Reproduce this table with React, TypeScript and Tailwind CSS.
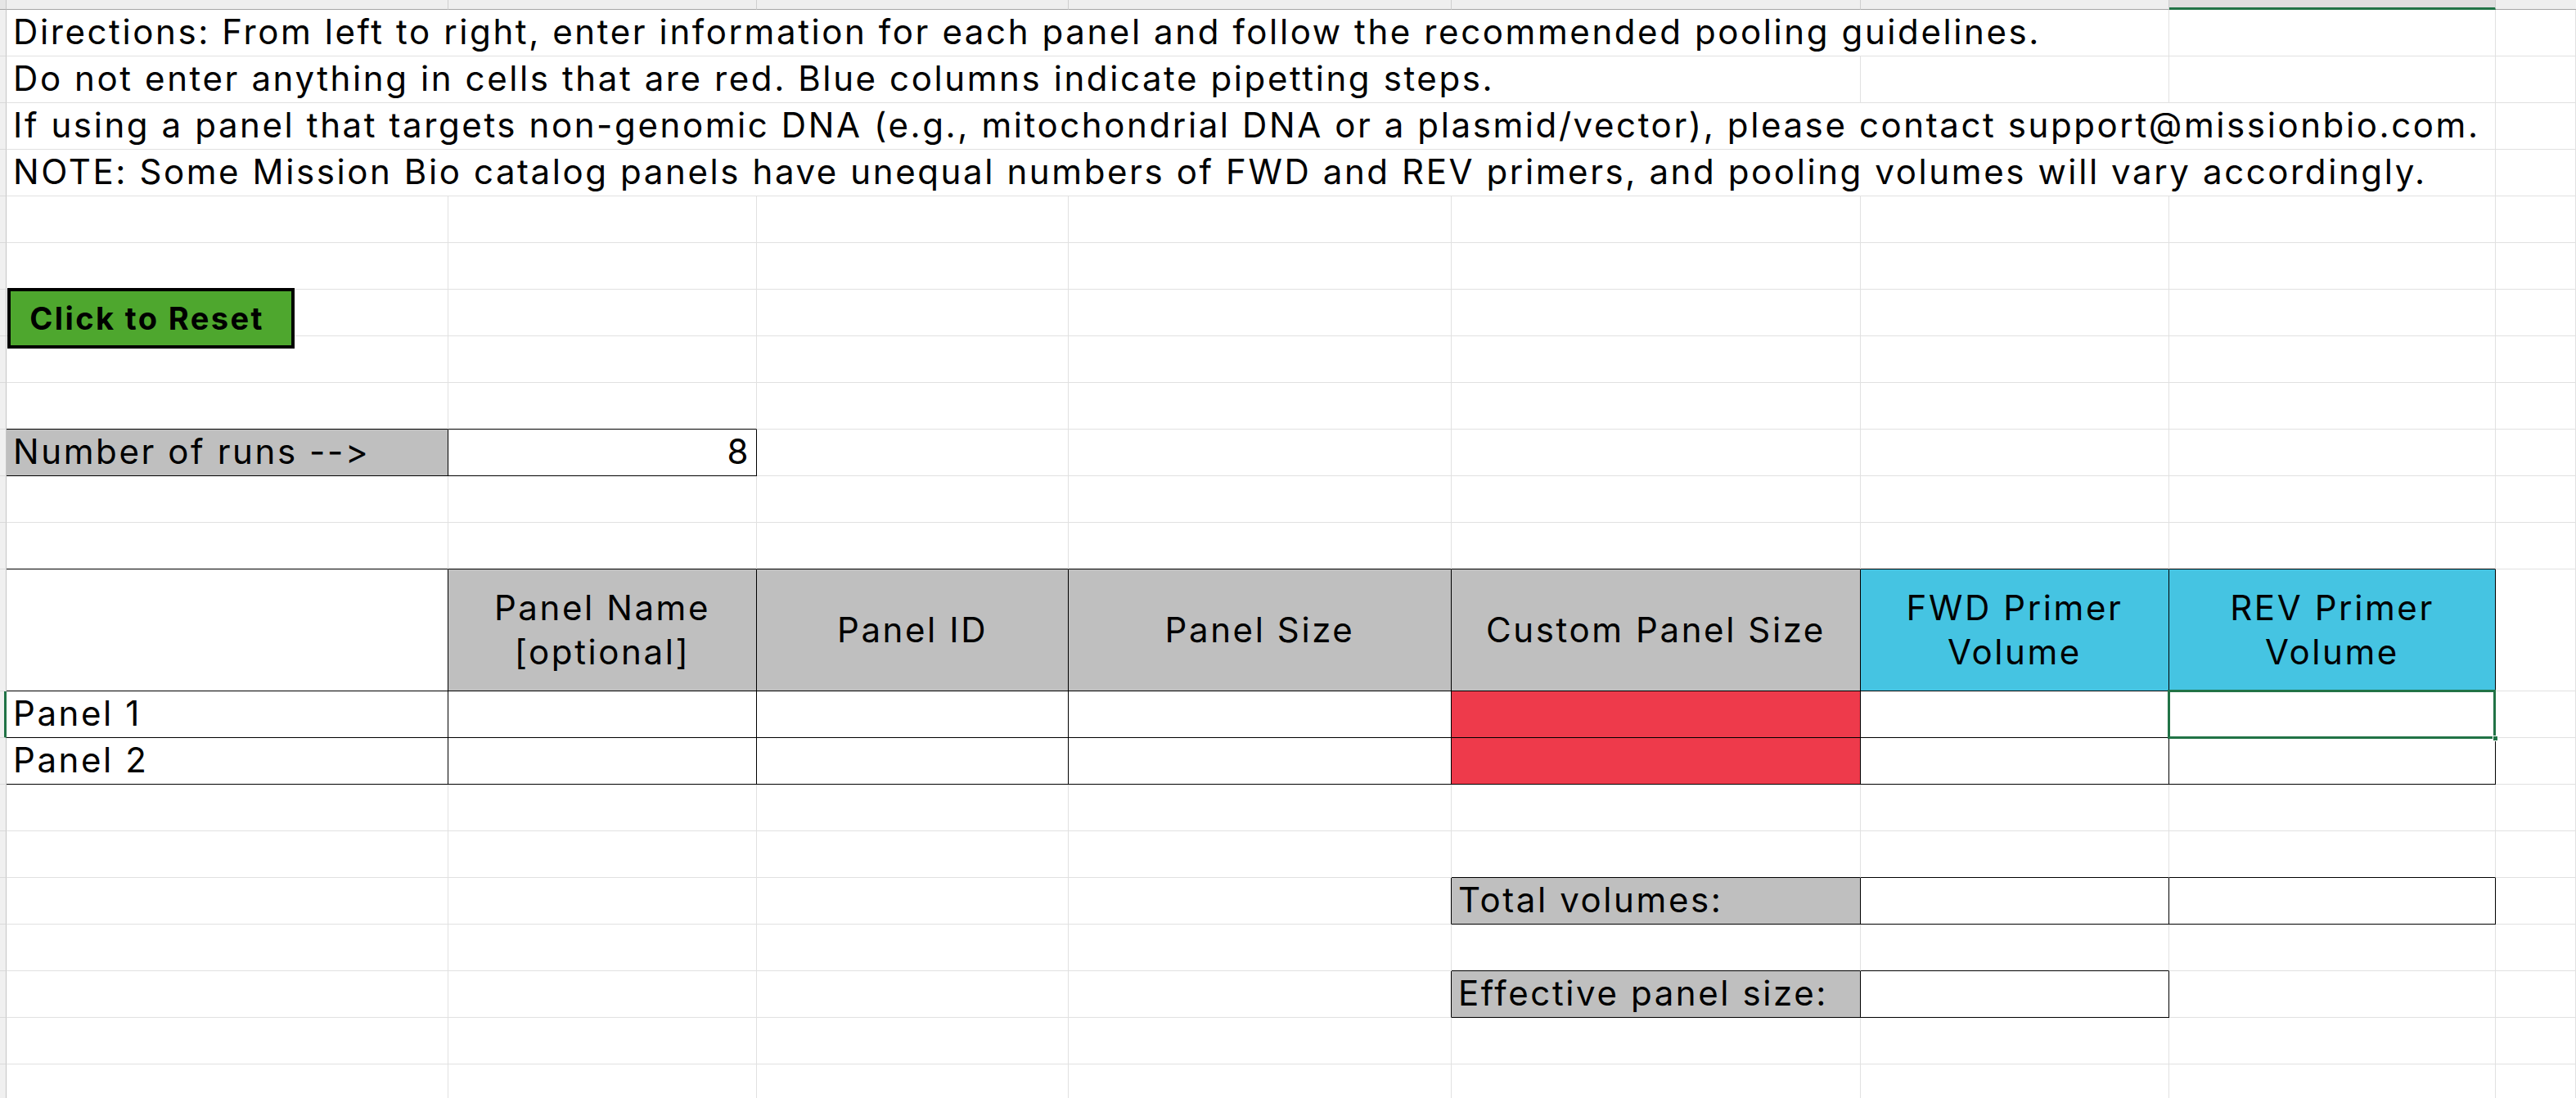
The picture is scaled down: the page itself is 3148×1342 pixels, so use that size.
import React from "react";

type Line = "grid" | "black" | "none";

interface CellSpec {
  span?: number;
  r?: Line;
  b?: Line;
  bg?: string;
  text?: React.ReactNode;
  align?: "left" | "right" | "center";
  selected?: boolean;
}

const GREY = "bg-[#bfbfbf]";
const RED = "bg-[#ee3a4b]";
const CYAN = "bg-[#45c4e2]";

const spanClass: Record<number, string> = {
  1: "",
  5: "col-span-5",
  6: "col-span-6",
  7: "col-span-7",
};

function Cell({ span = 1, r = "grid", b = "grid", bg = "bg-white", text, align = "left", selected }: CellSpec) {
  const rc = r === "black" ? "border-r-black" : r === "none" ? "border-r-transparent" : "border-r-[#e1e1e1]";
  const bc = b === "black" ? "border-b-black" : b === "none" ? "border-b-transparent" : "border-b-[#e1e1e1]";
  const al =
    align === "center"
      ? "items-center justify-center text-center px-2"
      : align === "right"
        ? "items-end justify-end pr-[7px] pb-[8px]"
        : "items-end justify-start pl-[8px] pb-[8px]";

  return (
    <div className={`relative flex border-r border-b ${rc} ${bc} ${bg} ${al} ${spanClass[span]}`}>
      {text !== undefined &&
        (align === "center" ? (
          <span className="leading-[54px]">{text}</span>
        ) : (
          <span className="whitespace-nowrap leading-none">{text}</span>
        ))}
      {selected && (
        <>
          <div className="pointer-events-none absolute -top-[2px] -left-[2px] -right-[1px] -bottom-[2px] z-10 border-[3px] border-[#217346]" />
          <div className="absolute -right-[4px] -bottom-[5px] z-10 h-[7px] w-[7px] border border-white bg-[#217346]" />
        </>
      )}
    </div>
  );
}

const empty = (n: number): CellSpec[] => Array.from({ length: n }, () => ({}));

const rows: CellSpec[][] = [
  [
    {
      span: 6,
      text: "Directions: From left to right, enter information for each panel and follow the recommended pooling guidelines.",
    },
    {},
    {},
  ],
  [{ span: 5, text: "Do not enter anything in cells that are red. Blue columns indicate pipetting steps." }, {}, {}, {}],
  [
    {
      span: 7,
      text: "If using a panel that targets non-genomic DNA (e.g., mitochondrial DNA or a plasmid/vector), please contact support@missionbio.com.",
    },
    {},
  ],
  [
    {
      span: 7,
      text: "NOTE: Some Mission Bio catalog panels have unequal numbers of FWD and REV primers, and pooling volumes will vary accordingly.",
    },
    {},
  ],
  empty(8),
  empty(8),
  empty(8),
  empty(8),
  [{ b: "black" }, { b: "black" }, ...empty(6)],
  [
    { bg: GREY, r: "black", b: "black", text: "Number of runs -->" },
    { r: "black", b: "black", text: "8", align: "right" },
    ...empty(6),
  ],
  empty(8),
  [...Array.from({ length: 7 }, (): CellSpec => ({ b: "black" })), {}],
  [
    { r: "black", b: "black" },
    { bg: GREY, r: "black", b: "black", align: "center", text: <>Panel Name<br />[optional]</> },
    { bg: GREY, r: "black", b: "black", align: "center", text: "Panel ID" },
    { bg: GREY, r: "black", b: "black", align: "center", text: "Panel Size" },
    { bg: GREY, r: "black", b: "black", align: "center", text: "Custom Panel Size" },
    { bg: CYAN, r: "black", b: "black", align: "center", text: <>FWD Primer<br />Volume</> },
    { bg: CYAN, r: "black", b: "black", align: "center", text: <>REV Primer<br />Volume</> },
    {},
  ],
  [
    { r: "black", b: "black", text: "Panel 1" },
    { r: "black", b: "black" },
    { r: "black", b: "black" },
    { r: "black", b: "black" },
    { bg: RED, r: "black", b: "black" },
    { r: "black", b: "black" },
    { r: "black", b: "black", selected: true },
    {},
  ],
  [
    { r: "black", b: "black", text: "Panel 2" },
    { r: "black", b: "black" },
    { r: "black", b: "black" },
    { r: "black", b: "black" },
    { bg: RED, r: "black", b: "black" },
    { r: "black", b: "black" },
    { r: "black", b: "black" },
    {},
  ],
  empty(8),
  [...empty(4), { b: "black" }, { b: "black" }, { b: "black" }, {}],
  [
    ...empty(3),
    { r: "black" },
    { bg: GREY, r: "black", b: "black", text: "Total volumes:" },
    { r: "black", b: "black" },
    { r: "black", b: "black" },
    {},
  ],
  [...empty(4), { b: "black" }, { b: "black" }, {}, {}],
  [
    ...empty(3),
    { r: "black" },
    { bg: GREY, r: "black", b: "black", text: "Effective panel size:" },
    { r: "black", b: "black" },
    {},
    {},
  ],
  empty(8),
  empty(8),
];

export default function App() {
  return (
    <div className="relative h-[1342px] w-[3148px] overflow-hidden bg-white font-['Inter',sans-serif] text-[42px] tracking-[2.6px] text-black [font-feature-settings:'calt'_0,'liga'_0]">
      <div className="grid grid-cols-[8px_540px_377px_381px_468px_500px_377px_399px_1fr] grid-rows-[12px_repeat(12,57px)_149px_repeat(9,57px)]">
        {/* column header strip, cut off at the top */}
        <div className="border-r border-b border-r-[#c8c8c8] border-b-[#a6a6a6] bg-[#e6e6e6]" />
        {[0, 1, 2, 3, 4, 5].map((i) => (
          <div key={i} className="border-r border-b border-r-[#cfcfcf] border-b-[#a6a6a6] bg-[#efefef]" />
        ))}
        <div className="border-r border-r-[#cfcfcf] border-b-[3px] border-b-[#217346] bg-[#dedede]" />
        <div className="border-b border-b-[#a6a6a6] bg-[#efefef]" />

        {rows.map((row, ri) => (
          <React.Fragment key={ri}>
            <div
              className={`border-b border-b-[#dadada] bg-[#f0f0f0] ${
                ri === 13 ? "border-r-[3px] border-r-[#217346]" : "border-r border-r-[#c6c6c6]"
              }`}
            />
            {row.map((c, ci) => (
              <Cell key={ci} {...c} />
            ))}
          </React.Fragment>
        ))}
      </div>

      {/* floating reset button shape */}
      <button className="absolute left-[9px] top-[352px] flex h-[74px] w-[351px] items-center justify-center border-[4px] border-black bg-[#4ea72e] pr-[10px] text-[38px] font-bold tracking-[2.4px] text-black">
        Click to Reset
      </button>
    </div>
  );
}
